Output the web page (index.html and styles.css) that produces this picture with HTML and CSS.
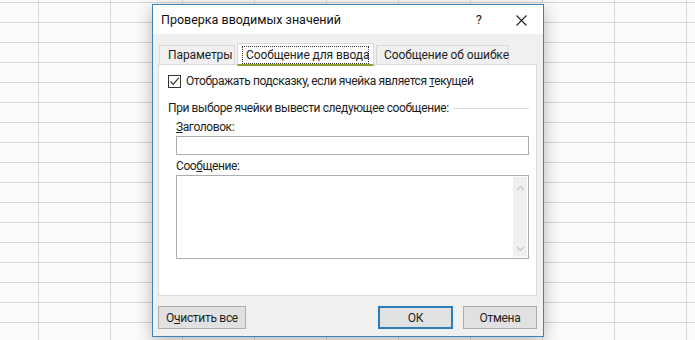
FILE: index.html
```html
<!DOCTYPE html>
<html lang="ru">
<head>
  <meta charset="UTF-8">
  <title>Проверка вводимых значений</title>
  <link rel="stylesheet" href="styles.css">
</head>
<body>
  <div class="dialog">
    <div class="titlebar">
      <span class="title">Проверка вводимых значений</span>
      <span class="help">?</span>
      <svg class="close" width="11" height="11" viewBox="0 0 11 11">
        <path d="M0.5 0.5 L10.5 10.5 M10.5 0.5 L0.5 10.5" stroke="#222" stroke-width="1.1" fill="none"/>
      </svg>
    </div>
    <div class="content">
      <div class="tabs">
        <div class="tab">Параметры</div>
        <div class="tab active"><span class="focus">Сообщение для ввода</span></div>
        <div class="tab">Сообщение об ошибке</div>
      </div>
      <div class="panel">
        <label class="check-row">
          <span class="checkbox">
            <svg width="11" height="11" viewBox="0 0 11 11">
              <path d="M1.5 5.5 L4.2 8.3 L9.8 1.8" stroke="#333" stroke-width="1.2" fill="none"/>
            </svg>
          </span>
          <span>Отображать подсказку, если ячейка является <u>т</u>екущей</span>
        </label>
        <div class="group-title">
          <span>При выборе ячейки вывести следующее сообщение:</span>
          <span class="group-line"></span>
        </div>
        <div class="field">
          <div class="field-label"><u>З</u>аголовок:</div>
          <div class="input"></div>
        </div>
        <div class="field">
          <div class="field-label">Соо<u>б</u>щение:</div>
          <div class="textarea">
            <div class="scroll">
              <svg width="9" height="6" viewBox="0 0 9 6"><path d="M1 5 L4.5 1.5 L8 5" stroke="#c4c4c4" stroke-width="1.2" fill="none"/></svg>
              <svg width="9" height="6" viewBox="0 0 9 6"><path d="M1 1 L4.5 4.5 L8 1" stroke="#c4c4c4" stroke-width="1.2" fill="none"/></svg>
            </div>
          </div>
        </div>
      </div>
      <div class="buttons">
        <button class="btn clear">О<u>ч</u>истить все</button>
        <div class="spacer"></div>
        <button class="btn ok">ОК</button>
        <button class="btn">Отмена</button>
      </div>
    </div>
  </div>
</body>
</html>
```

FILE: styles.css
```css
body {
  margin: 0;
  height: 340px;
  overflow: hidden;
  font-family: Roboto, "Noto Sans", sans-serif;
  font-size: 12px;
  color: #1e1e1e;
  background-color: #fbfbfb;
  background-image:
    repeating-linear-gradient(to bottom, transparent 0, transparent 2px, #d6d6d6 2px, #d6d6d6 3px, transparent 3px, transparent 20px),
    repeating-linear-gradient(to right, transparent 0, transparent 38px, #d6d6d6 38px, #d6d6d6 39px, transparent 39px, transparent 72px);
}
.dialog {
  margin: 4px 0 0 152px;
  width: 390px;
  height: 331px;
  border: 1px solid #3d83bd;
  background: #f0f0f0;
  box-shadow: 0 4px 16px rgba(0,0,0,0.28);
  display: flex;
  flex-direction: column;
}
.titlebar {
  height: 29px;
  background: #fff;
  display: flex;
  align-items: center;
  padding: 0 16px 0 8px;
  font-size: 12.5px;
}
.title {
  flex: 1;
  color: #111;
}
.help {
  margin-right: 34px;
  font-size: 13px;
  color: #222;
}
.close {
  margin-top: 2px;
}
.content {
  flex: 1;
  padding: 8px 6px 0 5px;
  display: flex;
  flex-direction: column;
}
.tabs {
  display: flex;
  align-items: flex-end;
  height: 22px;
  padding-left: 1px;
  white-space: nowrap;
  letter-spacing: -0.1px;
}
.tab {
  height: 19px;
  line-height: 18px;
  padding: 0 6px;
  border: 1px solid #d9d9d9;
  border-bottom: none;
  background: #f0f0f0;
  color: #1e1e1e;
  margin-right: 2px;
  box-sizing: border-box;
}
.tab:first-child {
  width: 76px;
  padding-left: 8px;
}
.tab.active {
  height: 23px;
  width: 137px;
  padding: 2px 4px 0;
  background: #fff;
  border-bottom: 2px solid #8fa033;
  position: relative;
  z-index: 1;
  margin-bottom: -2px;
}
.tab:last-child {
  width: 133px;
  padding-left: 7px;
}
.focus {
  display: block;
  border: 1px dotted #333;
  line-height: 16px;
  padding: 0 3px;
}
.panel {
  height: 232px;
  background: #fff;
  border: 1px solid #d9d9d9;
  box-sizing: border-box;
  padding: 9px 7px 0 9px;
  white-space: nowrap;
  letter-spacing: -0.4px;
}
.check-row {
  display: flex;
  align-items: center;
  height: 14px;
  gap: 5px;
}
.checkbox {
  width: 13px;
  height: 13px;
  border: 1px solid #333;
  box-sizing: border-box;
  display: flex;
  align-items: center;
  justify-content: center;
}
.group-title {
  display: flex;
  align-items: center;
  margin-top: 12px;
  height: 16px;
  gap: 4px;
}
.group-line {
  flex: 1;
  border-top: 1px solid #dcdcdc;
}
.field {
  padding-left: 8px;
}
.field-label {
  margin-top: 3px;
  height: 16px;
  line-height: 16px;
  margin-bottom: 1px;
}
.field + .field .field-label {
  margin-top: 3px;
  margin-bottom: 1px;
}
.input {
  height: 19px;
  border: 1px solid #adadad;
  box-sizing: border-box;
  background: #fff;
}
.textarea {
  height: 84px;
  border: 1px solid #adadad;
  box-sizing: border-box;
  background: #fff;
  display: flex;
  justify-content: flex-end;
  padding: 1px;
}
.scroll {
  width: 14px;
  background: #f0f0f0;
  display: flex;
  flex-direction: column;
  align-items: center;
  justify-content: space-between;
  padding: 8px 0 5px;
}
.buttons {
  display: flex;
  margin-top: 10px;
  gap: 10px;
}
.spacer {
  flex: 1;
}
button {
  font-family: inherit;
}
.btn {
  height: 23px;
  width: 74px;
  border: 1px solid #adadad;
  background: #e1e1e1;
  font-size: 12px;
  letter-spacing: -0.3px;
  color: #1e1e1e;
  padding: 0;
}
.clear {
  width: 88px;
}
.ok {
  width: 75px;
  border: 2px solid #2b7cb8;
}
```
